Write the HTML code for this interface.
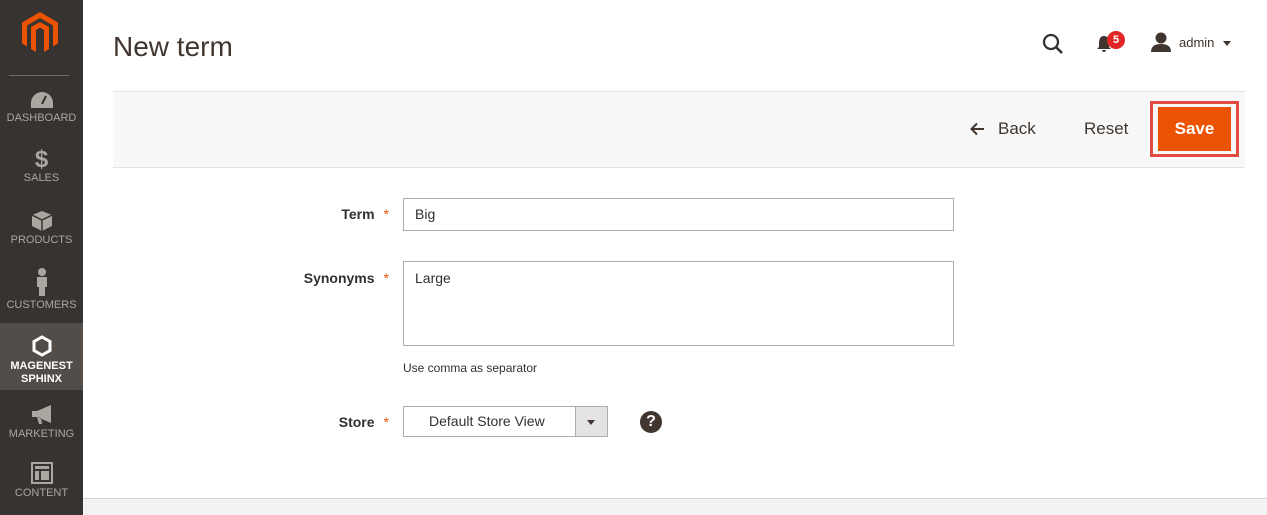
<!DOCTYPE html>
<html><head><style>
*{margin:0;padding:0;box-sizing:border-box}
body{width:1267px;height:515px;overflow:hidden;font-family:"Liberation Sans",sans-serif;background:#fff;position:relative;color:#303030}
.side{position:absolute;left:0;top:0;width:83px;height:515px;background:#373330}
.sep{position:absolute;left:9px;top:75px;width:60px;height:1px;background:#736963}
.item{position:absolute;left:0;width:83px;text-align:center;color:#aaa6a0;font-size:11px}
.item svg{display:block;margin:0 auto 3px}
.act{background:#524d49;color:#fff;font-weight:bold}
.a{position:absolute}
.lbl{position:absolute;font-size:14px;font-weight:bold;text-align:right;width:120px;color:#303030}
.star{color:#eb5202;font-weight:normal;margin-left:9px}
.inp{position:absolute;border:1px solid #adadad;background:#fff;font-size:14px;padding:0 0 0 11px}
</style></head><body>
<div class="side">
 <svg class="a" style="left:22px;top:12px" width="36" height="42" viewBox="0 0 36 42"><path d="M18 0L36 10.5V31.5L31 34.5V13.5L18 6L5 13.5V34.5L0 31.5V10.5Z M18 10L27 15V37L22 40V18L18 15.5L14 18V40L9 37V15Z" fill="#eb5202"/></svg>
 <div class="sep"></div>
 <div class="item" style="top:91px"><svg width="24" height="18" viewBox="0 0 24 18"><path d="M12 1A11 11 0 0 0 1 12v5h22v-5A11 11 0 0 0 12 1z" fill="#aaa6a0"/><path d="M12 13l4-8" stroke="#373330" stroke-width="2"/></svg>DASHBOARD</div>
 <div class="item" style="top:148px"><div style="font-size:24px;font-weight:bold;line-height:24px">$</div>SALES</div>
 <div class="item" style="top:211px"><svg width="20" height="20" viewBox="0 0 20 20"><path d="M10 0L20 4V15L10 20L0 15V4Z" fill="#aaa6a0"/><path d="M0 4L10 9L20 4M10 9V20" stroke="#373330" stroke-width="1.5" fill="none"/></svg>PRODUCTS</div>
 <div class="item" style="top:268px"><svg width="14" height="28" viewBox="0 0 14 28"><circle cx="7" cy="4" r="4" fill="#aaa6a0"/><path d="M2 9h10v10h-2v9h-6v-9h-2z" fill="#aaa6a0"/></svg>CUSTOMERS</div>
 <div class="item act" style="top:323px;height:67px;padding-top:12px;line-height:13px"><svg width="20" height="22" viewBox="0 0 20 22"><path d="M10 2L18 6.5V15.5L10 20L2 15.5V6.5Z" fill="none" stroke="#fff" stroke-width="3"/></svg>MAGENEST<br>SPHINX</div>
 <div class="item" style="top:405px"><svg width="24" height="20" viewBox="0 0 24 20"><path d="M2 6h5L21 0V18L7 12H2z M7 12l2 7h3l-1-6" fill="#aaa6a0"/></svg>MARKETING</div>
 <div class="item" style="top:462px"><svg width="22" height="22" viewBox="0 0 22 22"><rect x="1" y="1" width="20" height="20" fill="none" stroke="#aaa6a0" stroke-width="2"/><rect x="4" y="4" width="14" height="3" fill="#aaa6a0"/><rect x="4" y="9" width="4" height="9" fill="#aaa6a0"/><rect x="10" y="9" width="8" height="9" fill="#aaa6a0"/></svg>CONTENT</div>
</div>
<div class="a" style="left:113px;top:31px;font-size:28px;color:#41362f">New term</div>
<svg class="a" style="left:1042px;top:33px" width="22" height="22" viewBox="0 0 22 22"><circle cx="9" cy="9" r="7" fill="none" stroke="#333" stroke-width="2.3"/><path d="M14 14l6 6" stroke="#333" stroke-width="2.6"/></svg>
<svg class="a" style="left:1096px;top:35px" width="16" height="18" viewBox="0 0 16 18"><path d="M8 1C4 1 3 5 3 8v4l-2 2h14l-2-2V8c0-3-1-7-5-7z M6 15a2 2 0 0 0 4 0z" fill="#41362f"/></svg>
<div class="a" style="left:1107px;top:31px;width:18px;height:18px;border-radius:50%;background:#e22626;color:#fff;font-size:11px;font-weight:bold;text-align:center;line-height:18px">5</div>
<svg class="a" style="left:1150px;top:32px" width="22" height="20" viewBox="0 0 22 20"><circle cx="11" cy="6" r="5.5" fill="#41362f"/><path d="M1 20c0-6 4-8 10-8s10 2 10 8z" fill="#41362f"/></svg>
<div class="a" style="left:1179px;top:35px;font-size:13px;color:#41362f">admin</div>
<div class="a" style="left:1223px;top:41px;border:4px solid transparent;border-top:5px solid #41362f;border-bottom:0"></div>
<div class="a" style="left:113px;top:91px;width:1132px;height:77px;background:#f8f8f8;border-top:1px solid #e3e3e3;border-bottom:1px solid #e3e3e3"></div>
<svg class="a" style="left:970px;top:122px" width="15" height="14" viewBox="0 0 15 14"><path d="M14 7H2M7 1.5L1.5 7L7 12.5" fill="none" stroke="#41362f" stroke-width="2"/></svg>
<div class="a" style="left:998px;top:119px;font-size:17px;color:#41362f">Back</div>
<div class="a" style="left:1084px;top:119px;font-size:17px;color:#41362f">Reset</div>
<div class="a" style="left:1150px;top:101px;width:89px;height:56px;border:3px solid #e04a40"></div>
<div class="a" style="left:1158px;top:107px;width:73px;height:44px;background:#eb5202;color:#fff;font-size:17px;font-weight:bold;text-align:center;line-height:44px">Save</div>
<div class="lbl" style="left:269px;top:206px">Term<span class="star">*</span></div>
<div class="inp" style="left:403px;top:198px;width:551px;height:33px;line-height:31px">Big</div>
<div class="lbl" style="left:269px;top:270px">Synonyms<span class="star">*</span></div>
<div class="inp" style="left:403px;top:261px;width:551px;height:85px;padding-top:8px">Large</div>
<div class="a" style="left:403px;top:361px;font-size:12px;color:#303030">Use comma as separator</div>
<div class="lbl" style="left:269px;top:414px">Store<span class="star">*</span></div>
<div class="inp" style="left:403px;top:406px;width:205px;height:31px;line-height:29px;padding-left:25px">Default Store View</div>
<div class="a" style="left:575px;top:407px;width:32px;height:29px;background:#e3e3e3;border-left:1px solid #adadad"></div>
<div class="a" style="left:587px;top:420px;border:4px solid transparent;border-top:5px solid #41362f;border-bottom:0"></div>
<div class="a" style="left:640px;top:411px;width:22px;height:22px;border-radius:50%;background:#41362f;color:#fff;font-weight:bold;font-size:16px;text-align:center;line-height:22px">?</div>
<div class="a" style="left:83px;top:498px;width:1184px;height:17px;background:#f3f3f3;border-top:1px solid #d6d6d6"></div>
</body></html>
